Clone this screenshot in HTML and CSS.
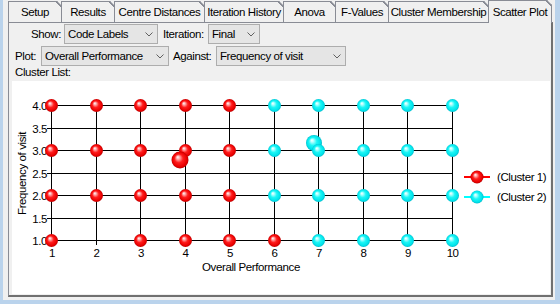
FILE: index.html
```html
<!DOCTYPE html>
<html>
<head>
<meta charset="utf-8">
<link rel="stylesheet" href="styles.css">
</head>
<body>
<div class="window">
  <div class="tabs">
    <div class="tab t-setup">Setup</div>
    <div class="tab t-results">Results</div>
    <div class="tab t-centre">Centre Distances</div>
    <div class="tab t-iter">Iteration History</div>
    <div class="tab t-anova">Anova</div>
    <div class="tab t-fval">F-Values</div>
    <div class="tab t-member">Cluster Membership</div>
    <div class="tab t-scatter active">Scatter Plot</div>
  </div>
  <div class="panel">
    <div class="row row1">
      <span class="lbl l-show">Show:</span>
      <div class="combo c-show"><span>Code Labels</span><svg class="chev" width="8" height="5" viewBox="0 0 8 5"><polyline points="0.5,0.5 4,4 7.5,0.5"/></svg></div>
      <span class="lbl l-iter">Iteration:</span>
      <div class="combo c-iter"><span>Final</span><svg class="chev" width="8" height="5" viewBox="0 0 8 5"><polyline points="0.5,0.5 4,4 7.5,0.5"/></svg></div>
    </div>
    <div class="row row2">
      <span class="lbl l-plot">Plot:</span>
      <div class="combo c-plot"><span>Overall Performance</span><svg class="chev" width="8" height="5" viewBox="0 0 8 5"><polyline points="0.5,0.5 4,4 7.5,0.5"/></svg></div>
      <span class="lbl l-against">Against:</span>
      <div class="combo c-against"><span>Frequency of visit</span><svg class="chev" width="8" height="5" viewBox="0 0 8 5"><polyline points="0.5,0.5 4,4 7.5,0.5"/></svg></div>
    </div>
    <div class="cluster-list">Cluster List:</div>
    <div class="chart">
      <svg width="538" height="213" viewBox="12 81 538 213">
        <defs>
          <radialGradient id="gr" cx="0.5" cy="0.5" r="0.5" fx="0.36" fy="0.32">
            <stop offset="0" stop-color="#ffffff"/>
            <stop offset="0.18" stop-color="#ffb4b4"/>
            <stop offset="0.5" stop-color="#ff1c1c"/>
            <stop offset="0.85" stop-color="#e80000"/>
            <stop offset="1" stop-color="#b80000"/>
          </radialGradient>
          <radialGradient id="gc" cx="0.5" cy="0.5" r="0.5" fx="0.36" fy="0.32">
            <stop offset="0" stop-color="#ffffff"/>
            <stop offset="0.18" stop-color="#b8ffff"/>
            <stop offset="0.5" stop-color="#1cf6f6"/>
            <stop offset="0.85" stop-color="#00e2ea"/>
            <stop offset="1" stop-color="#00b8c8"/>
          </radialGradient>
        </defs>
        <g class="grid">
          <line x1="47" y1="105.5" x2="452.5" y2="105.5"/>
          <line x1="47" y1="128.5" x2="452.5" y2="128.5"/>
          <line x1="47" y1="150.5" x2="452.5" y2="150.5"/>
          <line x1="47" y1="173.5" x2="452.5" y2="173.5"/>
          <line x1="47" y1="195.5" x2="452.5" y2="195.5"/>
          <line x1="47" y1="218.5" x2="452.5" y2="218.5"/>
          <line x1="47" y1="240.5" x2="452.5" y2="240.5"/>
          <line x1="51.5" y1="105" x2="51.5" y2="245"/>
          <line x1="96.5" y1="105" x2="96.5" y2="245"/>
          <line x1="140.5" y1="105" x2="140.5" y2="245"/>
          <line x1="185.5" y1="105" x2="185.5" y2="245"/>
          <line x1="229.5" y1="105" x2="229.5" y2="245"/>
          <line x1="274.5" y1="105" x2="274.5" y2="245"/>
          <line x1="318.5" y1="105" x2="318.5" y2="245"/>
          <line x1="363.5" y1="105" x2="363.5" y2="245"/>
          <line x1="407.5" y1="105" x2="407.5" y2="245"/>
          <line x1="452.5" y1="105" x2="452.5" y2="245"/>
        </g>
        <g class="ylab">
          <text x="47" y="110">4.0</text>
          <text x="47" y="133">3.5</text>
          <text x="47" y="155">3.0</text>
          <text x="47" y="178">2.5</text>
          <text x="47" y="200">2.0</text>
          <text x="47" y="223">1.5</text>
          <text x="47" y="245">1.0</text>
        </g>
        <g class="xlab">
          <text x="52" y="257">1</text>
          <text x="96.5" y="257">2</text>
          <text x="141" y="257">3</text>
          <text x="185.5" y="257">4</text>
          <text x="230" y="257">5</text>
          <text x="274.5" y="257">6</text>
          <text x="319" y="257">7</text>
          <text x="363.5" y="257">8</text>
          <text x="408" y="257">9</text>
          <text x="452.5" y="257">10</text>
        </g>
        <text class="title" x="251" y="271">Overall Performance</text>
        <text class="title" transform="translate(26,173.5) rotate(-90)">Frequency of visit</text>
        <g fill="url(#gc)">
          <circle cx="314" cy="143" r="8"/>
          <circle cx="274.5" cy="105.5" r="6.5"/><circle cx="318.5" cy="105.5" r="6.5"/><circle cx="363.5" cy="105.5" r="6.5"/><circle cx="407.5" cy="105.5" r="6.5"/><circle cx="452.5" cy="105.5" r="6.5"/>
          <circle cx="274.5" cy="150.5" r="6.5"/><circle cx="318.5" cy="150.5" r="6.5"/><circle cx="363.5" cy="150.5" r="6.5"/><circle cx="407.5" cy="150.5" r="6.5"/><circle cx="452.5" cy="150.5" r="6.5"/>
          <circle cx="274.5" cy="195.5" r="6.5"/><circle cx="318.5" cy="195.5" r="6.5"/><circle cx="363.5" cy="195.5" r="6.5"/><circle cx="407.5" cy="195.5" r="6.5"/><circle cx="452.5" cy="195.5" r="6.5"/>
          <circle cx="318.5" cy="240.5" r="6.5"/><circle cx="363.5" cy="240.5" r="6.5"/><circle cx="407.5" cy="240.5" r="6.5"/><circle cx="452.5" cy="240.5" r="6.5"/>
        </g>
        <g fill="url(#gr)">
          <circle cx="51.5" cy="105.5" r="6.5"/><circle cx="96.5" cy="105.5" r="6.5"/><circle cx="140.5" cy="105.5" r="6.5"/><circle cx="185.5" cy="105.5" r="6.5"/><circle cx="229.5" cy="105.5" r="6.5"/>
          <circle cx="51.5" cy="150.5" r="6.5"/><circle cx="96.5" cy="150.5" r="6.5"/><circle cx="140.5" cy="150.5" r="6.5"/><circle cx="185.5" cy="150.5" r="6.5"/><circle cx="229.5" cy="150.5" r="6.5"/>
          <circle cx="51.5" cy="195.5" r="6.5"/><circle cx="96.5" cy="195.5" r="6.5"/><circle cx="140.5" cy="195.5" r="6.5"/><circle cx="185.5" cy="195.5" r="6.5"/><circle cx="229.5" cy="195.5" r="6.5"/>
          <circle cx="51.5" cy="240.5" r="6.5"/><circle cx="140.5" cy="240.5" r="6.5"/><circle cx="185.5" cy="240.5" r="6.5"/><circle cx="229.5" cy="240.5" r="6.5"/><circle cx="274.5" cy="240.5" r="6.5"/>
          <circle cx="180" cy="160" r="8.5"/>
        </g>
        <g class="legend">
          <line x1="464" y1="177" x2="490" y2="177" stroke="#ff0000" stroke-width="2"/>
          <circle cx="477" cy="177" r="6.5" fill="url(#gr)"/>
          <text x="497" y="181">(Cluster 1)</text>
          <line x1="464" y1="197" x2="490" y2="197" stroke="#00ffff" stroke-width="2"/>
          <circle cx="477" cy="197" r="6.5" fill="url(#gc)"/>
          <text x="497" y="201">(Cluster 2)</text>
        </g>
      </svg>
    </div>
  </div>
</div>
</body>
</html>
```

FILE: styles.css
```css
html, body {
  margin: 0;
  padding: 0;
}
body {
  background: #bad3ec;
  width: 560px;
  height: 304px;
  overflow: hidden;
  font-family: "Liberation Sans", Arial, sans-serif;
  font-size: 11.5px;
  letter-spacing: -0.4px;
  color: #000;
}
.window {
  box-sizing: border-box;
  margin-left: 3px;
  width: 552px;
  height: 300px;
  padding-left: 5px;
  background: #f0f0f0;
}
.tabs {
  display: flex;
  align-items: flex-end;
  height: 22px;
}
.tab {
  box-sizing: border-box;
  position: relative;
  height: 21px;
  margin-right: -1px;
  border: 1px solid #898c95;
  border-bottom: none;
  background: #f0f0f0;
  display: flex;
  align-items: center;
  justify-content: center;
  white-space: nowrap;
  clip-path: polygon(0 0, calc(100% - 5px) 0, 100% 5px, 100% 100%, 0 100%);
}
.tab::after {
  content: "";
  position: absolute;
  top: -1px;
  right: -1px;
  width: 6px;
  height: 6px;
  background: linear-gradient(to top right, transparent calc(50% - 0.8px), #898c95 calc(50% - 0.8px), #898c95 calc(50% + 0.8px), transparent calc(50% + 0.8px));
}
.t-setup { width: 54px; }
.t-results { width: 54px; }
.t-centre { width: 91px; }
.t-iter { width: 80px; }
.t-anova { width: 53px; }
.t-fval { width: 54px; }
.t-member { width: 101px; }
.t-scatter { width: 64px; }
.tab.active {
  height: 23px;
  margin-bottom: -1px;
  z-index: 2;
  background: #f0f0f0;
}
.panel {
  box-sizing: border-box;
  width: 545px;
  height: 275px;
  border: 1px solid #898c95;
  border-right: 2px solid #707070;
  border-bottom: 2px solid #707070;
  padding-top: 1px;
}
.row {
  display: flex;
  align-items: center;
  height: 20px;
}
.row2 {
  margin-top: 2px;
}
.lbl {
  white-space: nowrap;
}
.l-show {
  width: 52px;
  text-align: right;
  margin-right: 3px;
}
.l-iter {
  width: 45px;
  margin-left: 5px;
}
.l-plot {
  width: 26px;
  padding-left: 6px;
}
.l-against {
  width: 43px;
  margin-left: 4px;
}
.combo {
  box-sizing: border-box;
  height: 20px;
  border: 1px solid #adadad;
  background: #e5e5e5;
  display: flex;
  align-items: center;
  justify-content: space-between;
  padding: 0 4px 0 3px;
  white-space: nowrap;
}
.c-show { width: 94px; }
.c-iter { width: 52px; }
.c-plot { width: 128px; }
.c-against { width: 130px; }
.chev {
  flex: none;
}
.chev polyline {
  fill: none;
  stroke: #606060;
  stroke-width: 1;
}
.cluster-list {
  height: 15px;
  line-height: 13px;
  padding-left: 6px;
}
.chart {
  margin-left: 3px;
  width: 538px;
  height: 213px;
  background: #fff;
}
.chart svg {
  display: block;
}
.grid line {
  stroke: #000;
  stroke-width: 1;
  shape-rendering: crispEdges;
}
.chart text {
  font-family: "Liberation Sans", Arial, sans-serif;
  font-size: 11.5px;
  letter-spacing: -0.4px;
  fill: #000;
}
.ylab text {
  text-anchor: end;
}
.xlab text {
  text-anchor: middle;
  letter-spacing: -0.6px;
}
.chart text.title {
  text-anchor: middle;
}
```
